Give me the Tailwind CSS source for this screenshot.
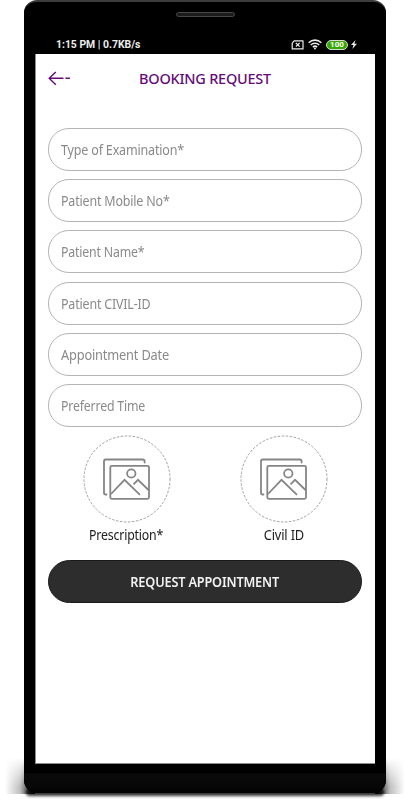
<!DOCTYPE html>
<html lang="en">
  <head>
    <meta charset="UTF-8" />
    <meta name="viewport" content="width=device-width, initial-scale=1.0" />
    <title>Booking Request</title>
    <script src="https://cdn.jsdelivr.net/npm/@tailwindcss/browser@4"></script>
  </head>
  <body class="bg-white overflow-hidden font-['Noto_Sans',sans-serif]">
    <div class="relative w-[410px] h-[800px] pl-6 overflow-hidden">
      <!-- shadow beside and under the phone -->
      <div class="absolute left-[5px] top-[758px] w-[30px] h-[36px] bg-linear-to-r from-transparent via-black/25 to-black mask-t-from-20% mask-t-to-100%"></div>
      <div class="absolute left-[375px] top-[758px] w-[30px] h-[36px] bg-linear-to-l from-transparent via-black/25 to-black mask-t-from-20% mask-t-to-100%"></div>
      <div class="absolute left-[26px] top-[788px] w-[358px] h-[8px] rounded-[4px] bg-black/80 blur-[1.5px]"></div>

      <div
        class="relative w-[362px] h-[793px] bg-black rounded-t-[13px] rounded-b-[13px] border-t-2 border-[#3c3c3c] px-[11px] flex flex-col bg-[linear-gradient(#000_771px,#0a0a0a_772px,#070707_785px,#000_791px)]"
      >
        <div class="h-[33px] pt-[10px] shrink-0">
          <div class="w-[59px] h-[5px] mx-auto rounded-full border border-[#484848] bg-[#1c1c1c]"></div>
        </div>

        <div class="h-[19px] shrink-0 flex items-center justify-between pl-[21px] pr-[18px] text-[#ececec]">
          <span class="font-[Roboto,sans-serif] font-bold text-[10.4px] leading-[18px] whitespace-nowrap">1:15 PM | 0.7KB/s</span>
          <div class="flex items-center">
            <svg class="w-[13px] h-[10px]" viewBox="0 0 13 10" fill="none" stroke="currentColor" stroke-width="1.2">
              <path d="M3.2 .9h8.8v8h-10.8v-5.8z" stroke-linejoin="round" />
              <path d="M4.9 3l3.7 3.7M8.6 3l-3.7 3.7" />
            </svg>
            <svg class="w-[14px] h-[11px] ml-[4px]" viewBox="0 0 14 11" fill="none" stroke="currentColor" stroke-width="1.6">
              <path d="M.7 3.7a9 9 0 0 1 12.6 0M2.8 6a6 6 0 0 1 8.4 0M4.9 8.1a3 3 0 0 1 4.2 0" />
              <circle cx="7" cy="9.6" r="1" fill="currentColor" stroke="none" />
            </svg>
            <div class="w-[22px] h-[10px] ml-[4px] rounded-full border border-[#d8d8d8] bg-[#39a900] text-white font-[Roboto,sans-serif] font-bold text-[8px] leading-[8px] text-center">100</div>
            <svg class="w-[6px] h-[9px] ml-[3px]" viewBox="0 0 6 9" fill="currentColor">
              <path d="M4.5 0L0 5h2.5L1.3 9L6 3.7H3.4z" />
            </svg>
          </div>
        </div>

        <div class="h-[709.5px] w-[340px] shrink-0 bg-white border-l border-b border-[#8c8c8c] pl-3 pr-[13px]">
          <div class="relative h-[49px] flex items-center justify-center">
            <svg class="absolute left-0 top-[17px] w-[24px] h-[15px]" viewBox="0 0 24 15" fill="none" stroke="#650b78" stroke-width="1.4">
              <path d="M7.8 .9L1.2 7.3l6.6 6.4M1.2 7.3h14.3M17.5 7.3h4.4" />
            </svg>
            <h1 class="pt-px text-[#650b78] font-medium text-[14.5px] tracking-[-0.25px] whitespace-nowrap">BOOKING REQUEST</h1>
          </div>

          <form class="mt-[25px] flex flex-col gap-[8.2px] text-[14px] text-[#8a8a8a]">
            <div class="h-[43px] shrink-0 rounded-[21px] border border-[#b5b5b5] px-3 flex items-center"><span class="tracking-[-0.2px] origin-left scale-x-[.895]">Type of Examination*</span></div>
            <div class="h-[43px] shrink-0 rounded-[21px] border border-[#b5b5b5] px-3 flex items-center"><span class="tracking-[-0.2px] origin-left scale-x-[.89]">Patient Mobile No*</span></div>
            <div class="h-[43px] shrink-0 rounded-[21px] border border-[#b5b5b5] px-3 flex items-center"><span class="tracking-[-0.2px] origin-left scale-x-[.88]">Patient Name*</span></div>
            <div class="h-[43px] shrink-0 rounded-[21px] border border-[#b5b5b5] px-3 pt-px flex items-center"><span class="tracking-[-0.2px] origin-left scale-x-[.89]">Patient CIVIL-ID</span></div>
            <div class="h-[43px] shrink-0 rounded-[21px] border border-[#b5b5b5] px-3 pt-px flex items-center"><span class="tracking-[-0.2px] origin-left scale-x-[.915]">Appointment Date</span></div>
            <div class="h-[43px] shrink-0 rounded-[21px] border border-[#b5b5b5] px-3 pt-px flex items-center"><span class="tracking-[-0.2px] origin-left scale-x-[.88]">Preferred Time</span></div>
          </form>

          <div class="grid grid-cols-2 h-[133px] pt-[8px] text-[14px] text-[#202020]">
            <div class="flex flex-col items-center">
              <svg class="w-[88px] h-[88px]" viewBox="0 0 88 88" fill="none" stroke="#858585" stroke-width="1.8">
                <circle cx="44" cy="44" r="43" stroke="#a0a0a0" stroke-width="1" stroke-dasharray="2.5 1.5" />
                <path d="M23.5 59.5h-.7q-1.8 0-1.8-1.8v-31.4q0-1.8 1.8-1.8h37q1.8 0 1.8 1.8v1.2" stroke-linecap="round" />
                <rect x="27.3" y="30.8" width="38.7" height="33" rx="1.5" />
                <circle cx="48.3" cy="38.5" r="4.2" />
                <path d="M28 59L41.5 44.8L57 59.8M50.5 49.3L55 44.8L65.5 55" />
              </svg>
              <span class="mt-[3px] leading-[18px] tracking-[-0.2px] scale-x-[.88]">Prescription*</span>
            </div>
            <div class="flex flex-col items-center">
              <svg class="w-[88px] h-[88px]" viewBox="0 0 88 88" fill="none" stroke="#858585" stroke-width="1.8">
                <circle cx="44" cy="44" r="43" stroke="#a0a0a0" stroke-width="1" stroke-dasharray="2.5 1.5" />
                <path d="M23.5 59.5h-.7q-1.8 0-1.8-1.8v-31.4q0-1.8 1.8-1.8h37q1.8 0 1.8 1.8v1.2" stroke-linecap="round" />
                <rect x="27.3" y="30.8" width="38.7" height="33" rx="1.5" />
                <circle cx="48.3" cy="38.5" r="4.2" />
                <path d="M28 59L41.5 44.8L57 59.8M50.5 49.3L55 44.8L65.5 55" />
              </svg>
              <span class="mt-[3px] leading-[18px] tracking-[-0.2px] scale-x-[.92]">Civil ID</span>
            </div>
          </div>

          <button class="flex items-center justify-center w-full h-[43px] rounded-[22px] border border-[#1a1a1a] bg-[#2d2d2d] text-[#f2f2f2] font-semibold text-[14px]">
            <span class="tracking-[-0.2px] scale-x-[.91] whitespace-nowrap pt-px">REQUEST APPOINTMENT</span>
          </button>
        </div>
      </div>
    </div>
  </body>
</html>
